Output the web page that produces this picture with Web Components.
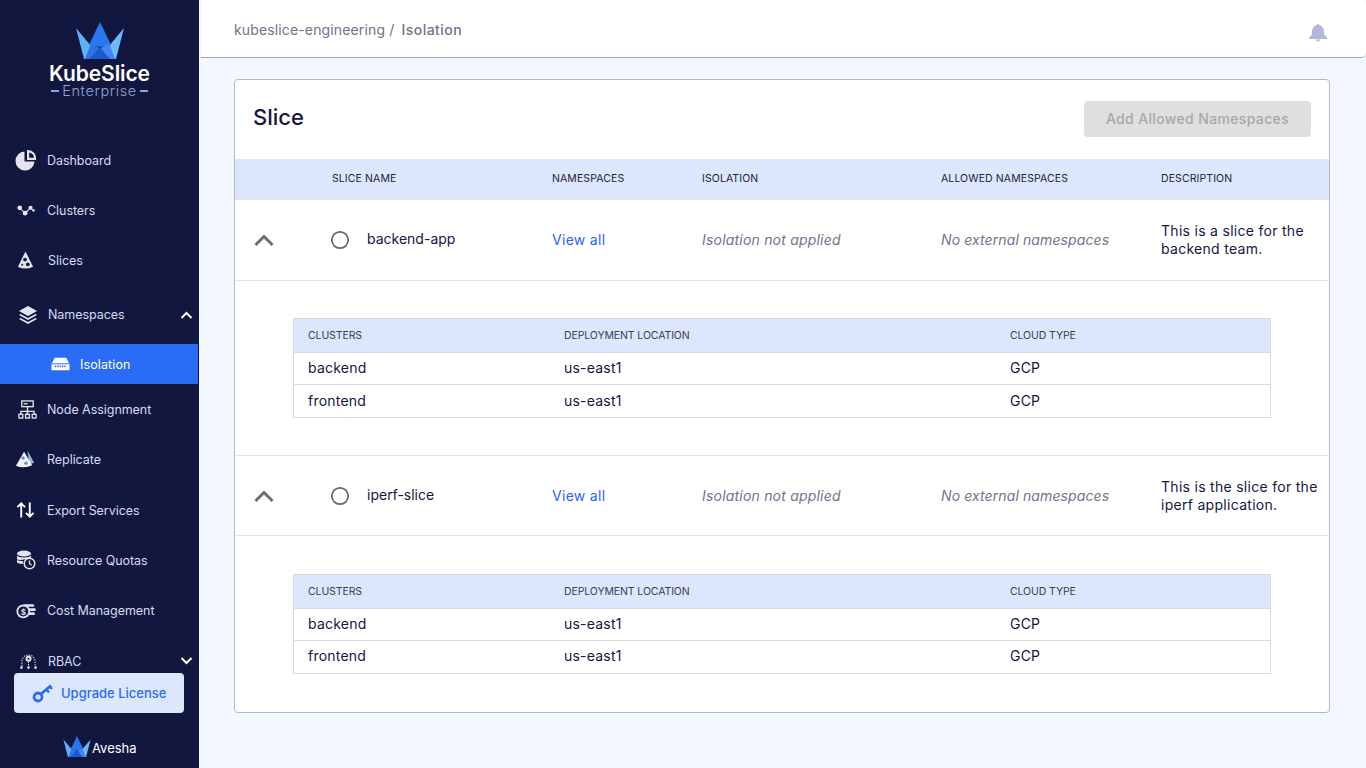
<!DOCTYPE html>
<html><head><meta charset="utf-8"><style>
html,body{margin:0;height:768px;overflow:hidden;font-family:"Inter","Liberation Sans",sans-serif;background:#f3f7fe}
</style></head><body>
<app-shell>
<side-bar></side-bar>
<main-area></main-area>
</app-shell>
<script>
const crown=(w,h)=>`<svg viewBox="0 0 48 37" width="${w}" height="${h}" style="display:block"><polygon points="0,6 15,24 10,37 8,37" fill="#5fb0fb"/><polygon points="48,6 33,24 38,37 40,37" fill="#6ab8fd"/><polygon points="24,0 35,23 24,25 13,23" fill="#2a78ee"/><polygon points="15,22 24,26 14,37 9,37" fill="#2e72e6"/><polygon points="33,22 39,37 33,37 24,26" fill="#3f86f0"/><polygon points="24,26 34,37 14,37" fill="#1c5bc9"/></svg>`;
const icons={
dash:`<svg viewBox="0 0 22 22" width="22" height="22"><path d="M9.500 2.500A9.500 9.500 0 1 0 19.500 12.500H9.500z" fill="#e4e4f0"/><path d="M12 1h1a8 8 0 0 1 8 9v1H12zM14.200 3.400v5.400h4.800a6 6 0 0 0-4.800-5.400z" fill="#e4e4f0" fill-rule="evenodd"/></svg>`,
clusters:`<svg viewBox="0 0 20 12" width="18" height="11"><path d="M3 3l6 6 6-6 3 3" stroke="#d6d6e6" stroke-width="1.200" fill="none"/><circle cx="3" cy="3" r="2.600" fill="#e4e4f0"/><circle cx="9" cy="9" r="2.600" fill="#e4e4f0"/><circle cx="15" cy="3" r="2.300" fill="#e4e4f0"/><circle cx="18.500" cy="6" r="1.300" fill="#e4e4f0"/></svg>`,
slices:`<svg viewBox="0 0 18 20" width="17" height="19"><path d="M9 .5L17 16.500Q9 20.500 1 16.500z" fill="#e4e4f0"/><circle cx="8.500" cy="9" r="2" fill="#12173f"/><circle cx="11.500" cy="14" r="2" fill="#12173f"/><circle cx="5.500" cy="14.500" r="1" fill="#12173f"/></svg>`,
ns:`<svg viewBox="0 0 20 20" width="20" height="20"><path d="M10 1l9 5-9 5-9-5z" fill="#e4e4f0"/><path d="M2.500 9L1 10l9 5 9-5-1.500-1L10 13z" fill="#e4e4f0"/><path d="M2.500 13L1 14l9 5 9-5-1.500-1L10 17z" fill="#e4e4f0"/></svg>`,
iso:`<svg viewBox="0 0 20 14" width="19" height="14"><path d="M4 .5h12L19.500 7v6.500H.5V7z" fill="#fff"/><path d="M.5 6.800h19" stroke="#2b6cf6" stroke-width="1"/><path d="M4 9.500h12" stroke="#2b6cf6" stroke-width="2" stroke-dasharray="1.500 1"/></svg>`,
node:`<svg viewBox="0 0 20 20" width="19" height="19" fill="none" stroke="#e4e4f0" stroke-width="1.400"><rect x="4" y="1" width="12" height="6"/><path d="M6 4h4"/><path d="M10 7v5M3 15v-3h14v3M10 12v3"/><rect x="1" y="15" width="4" height="4"/><rect x="8" y="15" width="4" height="4"/><rect x="15" y="15" width="4" height="4"/></svg>`,
rep:`<svg viewBox="0 0 22 20" width="21" height="20"><path d="M13 1l7 13-5 1.500z" fill="#9db5ea"/><path d="M9.500 2.500L18 16.500Q9 20.500 1 17z" fill="#f4f4fa"/><circle cx="8.500" cy="9" r="1.800" fill="#5f8fe6"/><circle cx="11.500" cy="14.500" r="1.800" fill="#5f8fe6"/></svg>`,
exp:`<svg viewBox="0 0 20 18" width="19" height="18" fill="none" stroke="#fff" stroke-width="2"><path d="M5.500 17V2M1.500 6l4-4 4 4M14.500 1v15M10.500 12l4 4 4-4"/></svg>`,
res:`<svg viewBox="0 0 20 20" width="20" height="20"><ellipse cx="8" cy="3.500" rx="7" ry="3" fill="#e4e4f0"/><path d="M1 5.500c1 2.500 13 2.500 14 0v2.500c-5 .5-10 3-14 1.500zM1 10c2 1 4 1.200 6 1-.3 1-.3 2-.1 3-2 0-4-.5-5.900-1.500z" fill="#e4e4f0"/><circle cx="13.500" cy="13.500" r="5.300" fill="#12173f" stroke="#e4e4f0" stroke-width="1.500"/><path d="M13.500 10.500v3.200l2.200 1.300" stroke="#e4e4f0" stroke-width="1.300" fill="none"/></svg>`,
cost:`<svg viewBox="0 0 22 18" width="20" height="17"><path d="M8 2h11a3 2 0 0 1 0 3H13zM14 6.500h7a2 2 0 0 1 0 3h-6zM15 11h5a2 2 0 0 1 0 3h-7z" fill="#e4e4f0"/><circle cx="8" cy="10" r="7.500" fill="#e4e4f0"/><circle cx="8" cy="10" r="5.500" fill="#12173f"/><text x="8" y="13.500" font-size="9.500" font-weight="700" text-anchor="middle" fill="#e4e4f0" font-family="Liberation Sans">$</text></svg>`,
rbac:`<svg viewBox="0 0 20 16" width="19" height="15" fill="none" stroke="#e4e4f0" stroke-width="1.100"><path d="M3 13V8a7 7 0 0 1 14 0v5M10 8v5" stroke-dasharray="1.500 1.200"/><circle cx="10" cy="5" r="3.200" fill="#e4e4f0" stroke="none"/><circle cx="10" cy="5" r="1.100" fill="#12173f" stroke="none"/><circle cx="2.500" cy="14.500" r="1.400" fill="#e4e4f0" stroke="none"/><circle cx="10" cy="14.500" r="1.400" fill="#e4e4f0" stroke="none"/><circle cx="17.500" cy="14.500" r="1.400" fill="#e4e4f0" stroke="none"/></svg>`
};
class SideItem extends HTMLElement{
 connectedCallback(){
  const ic=this.getAttribute('icon'),tx=this.getAttribute('tx')||47,chev=this.getAttribute('chev'),ix=this.getAttribute('ix')||15,h=this.getAttribute('h')||50,pt=this.getAttribute('pt')||0;
  const active=this.hasAttribute('active');
  const sr=this.attachShadow({mode:'open'});
  sr.innerHTML=`<style>:host{display:flex;align-items:center;height:${h}px;padding-left:${ix}px;padding-top:${pt}px;box-sizing:border-box;color:${active?'#fff':'#d5dcf3'};font-size:12.500px;letter-spacing:${active?'.12px':'-.05px'};background:${active?'#2b6cf6':'transparent'};flex:none;position:relative;margin-right:${active?1:0}px}
  .i{width:${tx-ix}px;display:flex;align-items:center;flex:none}.c{position:absolute;left:180px;top:50%;margin-top:-4px}svg{display:block}</style>
  <span class="i">${icons[ic]}</span><slot></slot>${chev?`<svg class="c" width="13" height="8" viewBox="0 0 13 8" fill="none" stroke="#fff" stroke-width="2"><path d="${chev=='up'?'M1.500 7l5-5 5 5':'M1.500 1l5 5 5-5'}"/></svg>`:''}`;
 }
}
customElements.define('side-item',SideItem);
class SideBar extends HTMLElement{
 constructor(){super();const s=this.attachShadow({mode:'open'});
 s.innerHTML=`<style>:host{display:flex;flex-direction:column;width:199px;height:768px;background:#12173f;flex:none;overflow:hidden;position:relative;font-family:Inter,"Liberation Sans",sans-serif}
 .logo{display:flex;flex-direction:column;align-items:center;padding-top:22px;height:113px;box-sizing:border-box;flex:none}
 .k{color:#fff;font-size:21px;font-weight:600;line-height:21px;margin-top:4px;letter-spacing:-.1px}
 .e{color:#93a5d3;font-size:14.500px;font-weight:300;line-height:14px;display:flex;align-items:center;gap:3px;letter-spacing:.6px}.e i{width:8px;height:1.500px;background:#93a5d3;display:block}
 nav{display:flex;flex-direction:column;padding-top:22px}
 .up{position:absolute;left:14px;top:673px;width:170px;height:40px;border-radius:4px;background:#dde7fb;color:#2b6cf6;display:flex;align-items:center;font-size:13px;font-weight:500;box-sizing:border-box;padding-left:18px;gap:8px;letter-spacing:0}
 .av{position:absolute;left:63px;top:736px;display:flex;align-items:center;gap:1px;color:#fff;font-size:13px}.av span{padding-top:3px}
 </style>
 <div class="logo">${crown(48,37)}<div class="k">KubeSlice</div><div class="e"><i></i>Enterprise<i></i></div></div>
 <nav>
 <side-item icon="dash" h="50">Dashboard</side-item>
 <side-item icon="clusters" ix="17" h="50">Clusters</side-item>
 <side-item icon="slices" ix="17" tx="48" h="50">Slices</side-item>
 <side-item icon="ns" ix="18" tx="48" h="59" chev="up">Namespaces</side-item>
 <side-item icon="iso" ix="51" tx="80" h="40" active>Isolation</side-item>
 <side-item icon="node" ix="18" h="50">Node Assignment</side-item>
 <side-item icon="rep" ix="15" h="50">Replicate</side-item>
 <side-item icon="exp" ix="16" h="51" pt="1">Export Services</side-item>
 <side-item icon="res" ix="16" h="50">Resource Quotas</side-item>
 <side-item icon="cost" ix="16" h="50">Cost Management</side-item>
 <side-item icon="rbac" ix="19" tx="48" h="52" chev="down">RBAC</side-item>
 </nav>
 <div class="up"><svg width="21" height="20" viewBox="0 0 21 20" fill="none" stroke="#2b6cf6" stroke-width="2.800"><circle cx="6" cy="14" r="4"/><path d="M9 11L19 2.500"/><path d="M14.500 6.500l2.500 3M18 3.500l2 2.500" stroke-width="2.400"/></svg><span>Upgrade License</span></div>
 <div class="av">${crown(28,21)}<span>Avesha</span></div>`;}
}
customElements.define('side-bar',SideBar);
class TopBar extends HTMLElement{
 constructor(){super();this.attachShadow({mode:'open'}).innerHTML=`<style>:host{display:flex;align-items:center;justify-content:space-between;height:58px;box-sizing:border-box;background:#fff;border-bottom:1px solid #a6a7b4;border-radius:0 5px 5px 0;padding:0 39px 0 33px;margin-left:2px;flex:none}
 .b{font-size:14px;color:#6e7389;letter-spacing:.14px;margin-top:2px}.b b{font-weight:500;letter-spacing:.45px;margin-left:3px}
 svg{display:block;margin-top:9px}</style><div class="b">kubeslice-engineering / <b>Isolation</b></div>
 <svg width="18" height="18" viewBox="0 0 18 18"><path d="M9 0a1.300 1.300 0 0 1 1.300 1.300C13.300 2 15 4.500 15 7.500V10.500l3 3V15H0v-1.500l3-3V7.500C3 4.500 4.700 2 7.700 1.300A1.300 1.300 0 0 1 9 0zM7 15.500h4a2 2 0 0 1-4 0z" fill="#b4b7da"/></svg>`;}
}
customElements.define('top-bar',TopBar);
class ClusterTable extends HTMLElement{
 constructor(){super();this.attachShadow({mode:'open'}).innerHTML=`<style>:host{display:block;margin:var(--mt,37px) 58px 37px 58px;border:1px solid #d6d8e3;font-size:14px;color:#12173f;box-sizing:border-box;height:100px}
 .r{display:grid;grid-template-columns:256px 446px 1fr;padding:0 0 2px 14px;align-items:center;height:32px;box-sizing:border-box;border-top:1px solid #d6d8e3;letter-spacing:.22px}
 .h{background:#dde7fb;height:33px;padding-bottom:0;border-top:0;font-size:10.500px;color:#3a3d55;letter-spacing:-.1px}
 .l{height:var(--r2,33px)}</style>
 <div class="r h"><span>CLUSTERS</span><span>DEPLOYMENT LOCATION</span><span>CLOUD TYPE</span></div>
 <div class="r"><span>backend</span><span>us-east1</span><span>GCP</span></div>
 <div class="r l"><span>frontend</span><span>us-east1</span><span>GCP</span></div>`;}
}
customElements.define('cluster-table',ClusterTable);
class SliceRow extends HTMLElement{
 constructor(){super();this.attachShadow({mode:'open'}).innerHTML=`<style>:host{display:grid;height:var(--h,80px);padding-bottom:var(--pb,0);box-sizing:border-box;border-bottom:1px solid #e1e3ec;font-size:14px;color:#12173f;align-items:center;grid-template-columns:95px 37px 185px 150px 239px 220px 1fr}
 .ch{padding-left:19px;display:block;padding-top:1px}.lk{color:#2f62f3;letter-spacing:.3px}.em{font-style:italic;color:#70738c;letter-spacing:.2px}.em2{letter-spacing:.1px}
 .n{padding-bottom:2px}
 .d{line-height:18px;white-space:nowrap;letter-spacing:.29px}
 svg{display:block}</style>
 <span class="ch"><svg width="20" height="12" viewBox="0 0 20 12" fill="none" stroke="#6e6e6e" stroke-width="2.900"><path d="M1.500 11L10 2.500 18.500 11"/></svg></span>
 <svg width="20" height="20" viewBox="0 0 20 20" fill="none" stroke="#666" stroke-width="1.700" style="margin-left:-.5px"><circle cx="10" cy="10" r="8.200"/></svg>
 <span class="n"><slot name="name"></slot></span><span class="lk">View all</span><span class="em">Isolation not applied</span><span class="em em2">No external namespaces</span><span class="d"><slot name="desc"></slot></span>`;}
}
customElements.define('slice-row',SliceRow);
class MainArea extends HTMLElement{
 constructor(){super();this.attachShadow({mode:'open'}).innerHTML=`<style>:host{display:flex;flex-direction:column;flex:1;min-width:0;background:#f3f7fe}
 .card{margin:21px 36px 0 35px;background:#fff;border:1px solid #b5b8cc;border-radius:4px;height:634px;box-sizing:border-box;overflow:hidden}
 .hd{display:flex;justify-content:space-between;align-items:center;height:79px;padding:0 18px;box-sizing:border-box}
 .t{font-size:22px;font-weight:500;color:#12173f;margin-bottom:6px}
 .btn{background:#dfdfdf;color:#a8a8a8;border-radius:4px;width:227px;height:36px;padding-bottom:2px;box-sizing:border-box;display:flex;align-items:center;justify-content:center;font-size:14px;letter-spacing:.35px;font-weight:500;margin-bottom:1px}
 .th{display:grid;grid-template-columns:97px 220px 150px 239px 220px 1fr;height:41px;padding-bottom:2px;background:#dde7fb;align-items:center;font-size:10.500px;color:#1e2140;border-bottom:1px solid #e1e3ec;box-sizing:border-box;letter-spacing:.1px}
 </style>
 <top-bar></top-bar>
 <div class="card"><div class="hd"><span class="t">Slice</span><span class="btn">Add Allowed Namespaces</span></div>
 <div class="th"><span></span><span>SLICE NAME</span><span>NAMESPACES</span><span>ISOLATION</span><span>ALLOWED NAMESPACES</span><span>DESCRIPTION</span></div>
 <slice-row style="--h:81px;--pb:1px"><span slot="name">backend-app</span><span slot="desc">This is a slice for the<br>backend team.</span></slice-row>
 <div style="border-bottom:1px solid #e1e3ec;height:175px;box-sizing:border-box;overflow:hidden"><cluster-table></cluster-table></div>
 <slice-row style="--h:80px"><span slot="name">iperf-slice</span><span slot="desc">This is the slice for the<br>iperf application.</span></slice-row>
 <cluster-table style="--mt:38px;--r2:32px"></cluster-table>
 </div>`;}
}
customElements.define('main-area',MainArea);
class AppShell extends HTMLElement{
 constructor(){super();this.attachShadow({mode:'open'}).innerHTML=`<style>:host{display:flex;width:1366px;height:768px}</style><slot></slot>`;}
}
customElements.define('app-shell',AppShell);
</script>
</body></html>
